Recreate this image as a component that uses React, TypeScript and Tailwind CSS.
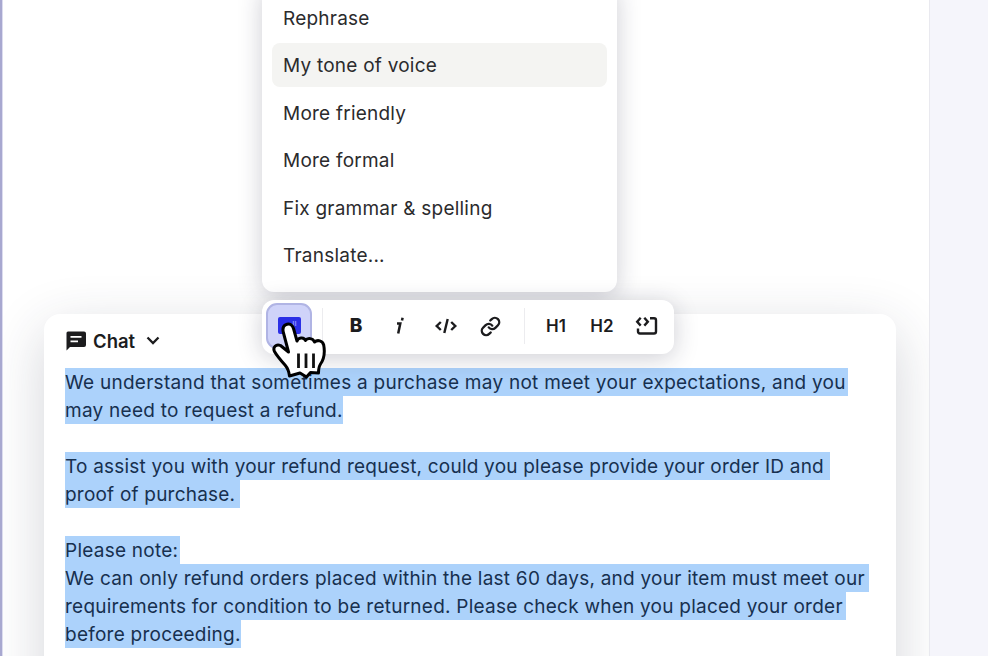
import React from "react";

type Line = { text: string; box: string };

const paragraphs: { tracking: string; lines: Line[] }[] = [
  {
    tracking: "tracking-[0.262px]",
    lines: [
      { text: "We understand that sometimes a purchase may not meet your expectations, and you", box: "w-[783px]" },
      { text: "may need to request a refund.", box: "w-[278px]" },
    ],
  },
  {
    tracking: "tracking-[0.210px]",
    lines: [
      { text: "To assist you with your refund request, could you please provide your order ID and", box: "w-[765px]" },
      { text: "proof of purchase.", box: "w-[175px]" },
    ],
  },
  {
    tracking: "tracking-[0.243px]",
    lines: [
      { text: "Please note:", box: "w-[115px]" },
      { text: "We can only refund orders placed within the last 60 days, and your item must meet our", box: "w-[804px]" },
      { text: "requirements for condition to be returned. Please check when you placed your order", box: "w-[781px]" },
      { text: "before proceeding.", box: "w-[176px]" },
    ],
  },
];

const menuItems = [
  "Rephrase",
  "My tone of voice",
  "More friendly",
  "More formal",
  "Fix grammar & spelling",
  "Translate...",
];

function ChatIcon() {
  return (
    <svg width="21" height="20" viewBox="0 0 21 20" className="ml-px shrink-0">
      <path d="M2 0.500H18Q20 0.500 20 2.500V14Q20 16 18 16H4L0.500 19.500V2Q0.500 0.500 2 0.500Z" fill="#1c1c1e" />
      <path d="M4.500 5.800H15.500M4.500 10.300H12" stroke="#fff" strokeWidth="1.800" />
    </svg>
  );
}

function Cursor() {
  return (
    <svg width="56" height="60" viewBox="0 0 56 60" className="absolute left-[272px] top-[321px] z-30">
      <path
        d="M13.500 3.800C17.500 1.800 20.500 3.800 21.500 7.500L25 20C26 16.500 32 15.500 33.500 19.500C35.500 16.500 41 17 42.500 21C45.500 18.500 50.500 19.500 51.700 24C53 31 52 38 48.500 43C46.500 46 46.500 49 46.500 52L38.500 51.500L34.500 56L28 52L17.500 55C17 50.500 16 47.500 13 44C8.500 39 5 35 2.500 30.500C0.500 26.500 4 22.500 8.500 24.500L16.500 31L11.500 12C10.500 8.500 10.500 5.500 13.500 3.800Z"
        fill="#fff"
        stroke="#000"
        strokeWidth="3"
        strokeLinejoin="round"
      />
      <path d="M26.500 32.500V47M34 32.500V47M41.500 32.500V47" stroke="#111" strokeWidth="2.800" />
    </svg>
  );
}

function Toolbar() {
  return (
    <div className="absolute left-[262px] top-[300px] z-20 flex h-[54px] w-[412px] items-center rounded-xl bg-white pb-[2px] font-semibold text-[#1c1c1e] shadow-[0_4px_24px_rgba(30,30,60,0.22)]">
      <div className="ml-[4px] flex h-[46px] w-[46px] shrink-0 items-center justify-center rounded-[11px] border-2 border-[#b0b4e4] bg-[#cfd3f9]">
        <div className="mb-[2px] flex h-[17px] w-[23px] justify-end rounded-[2px] bg-[#2b2fe6] pr-1 pt-0.5 text-[8px] leading-[8px] text-[#8d91ff]">ıı</div>
      </div>
      <div className="ml-[10px] h-[36px] w-px shrink-0 bg-[#ececef]" />
      <div className="ml-[23px] w-[20px] shrink-0 text-center text-[19px] font-extrabold leading-[28px]">B</div>
      <svg width="12" height="20" viewBox="0 0 12 20" className="ml-[28px] shrink-0" fill="none" stroke="#1c1c1e" strokeWidth="2.500">
        <path d="M3 7.500H6.300L4.200 17.500M8.600 1.800L8 4.600" />
      </svg>
      <svg width="24" height="18" viewBox="0 0 24 18" className="ml-[28px] shrink-0" fill="none" stroke="#1c1c1e" strokeWidth="2.400">
        <path d="M6.800 5L2.700 9L6.800 13M17.200 5L21.300 9L17.200 13M13.700 2L10.300 16" />
      </svg>
      <svg width="21" height="21" viewBox="0 0 24 24" className="ml-[22px] shrink-0" fill="none" stroke="#1c1c1e" strokeWidth="2.700" strokeLinecap="round">
        <path d="M10 13a5 5 0 0 0 7.540.540l3-3a5 5 0 0 0-7.070-7.070l-1.720 1.710" />
        <path d="M14 11a5 5 0 0 0-7.540-.540l-3 3a5 5 0 0 0 7.070 7.070l1.710-1.710" />
      </svg>
      <div className="ml-[23px] h-[36px] w-px shrink-0 bg-[#ececef]" />
      <div className="ml-[19px] w-[24px] shrink-0 text-center text-[17px] leading-[28px]">H1</div>
      <div className="ml-[21px] w-[26px] shrink-0 text-center text-[17px] leading-[28px]">H2</div>
      <svg width="24" height="20" viewBox="0 0 24 20" className="ml-[19px] shrink-0" fill="none" stroke="#1c1c1e" strokeWidth="2.400">
        <path d="M6.700 1.800L3.200 5.700L6.700 9.600M10.300 1.800L13.800 5.700L10.300 9.600M16 2.300H20Q22 2.300 22 4.300V15.500Q22 17.500 20 17.500H6Q4 17.500 4 15.500V12.500" />
      </svg>
    </div>
  );
}

export default function App() {
  return (
    <div className="relative flex h-[656px] w-[988px] overflow-hidden bg-white font-['Inter',sans-serif] text-[#2b2b2d]">
      <div className="w-[3px] shrink-0 border-r border-[#dcdcef] bg-[#a8a8d0]" />
      <main className="flex w-[927px] shrink-0 overflow-hidden border-r border-[#e9e9ef] pl-[41px] pt-[314px]">
        <section className="h-[400px] w-[852px] shrink-0 rounded-[16px] bg-white pl-[21px] shadow-[0_16px_56px_rgba(40,45,70,0.20)]">
          <header className="flex h-[54px] items-center text-[#1c1c1e]">
            <ChatIcon />
            <span className="ml-[6px] mt-px text-[18.5px] font-semibold">Chat</span>
            <svg width="14" height="10" viewBox="0 0 14 10" className="ml-[11px]" fill="none" stroke="#1c1c1e" strokeWidth="2.300">
              <path d="M1.500 1.500L7 7L12.500 1.500" />
            </svg>
          </header>
          <div className="flex flex-col gap-[28px] text-[19px] leading-[30px] text-[#17304f]">
            {paragraphs.map((p) => (
              <div key={p.tracking} className={p.tracking}>
                {p.lines.map((l) => (
                  <div key={l.text} className={"h-[28px] whitespace-nowrap bg-[#acd2fb] " + l.box}>
                    {l.text}
                  </div>
                ))}
              </div>
            ))}
          </div>
        </section>
      </main>
      <aside className="flex-1 bg-[#f5f5fb]" />

      <div className="absolute left-[262px] top-[-16px] z-10 h-[308px] w-[355px] rounded-[12px] bg-white px-[10px] pt-[11px] shadow-[0_4px_24px_rgba(30,30,60,0.22)]">
        {menuItems.map((item, i) => (
          <div
            key={item}
            className={
              "mb-[3.500px] flex h-[44px] items-center rounded-[8px] pl-[11px] pt-[4px] text-[19px] tracking-[0.23px] " +
              (i === 1 ? "bg-[#f4f4f2]" : "")
            }
          >
            {item}
          </div>
        ))}
      </div>
      <Toolbar />
      <Cursor />
    </div>
  );
}
